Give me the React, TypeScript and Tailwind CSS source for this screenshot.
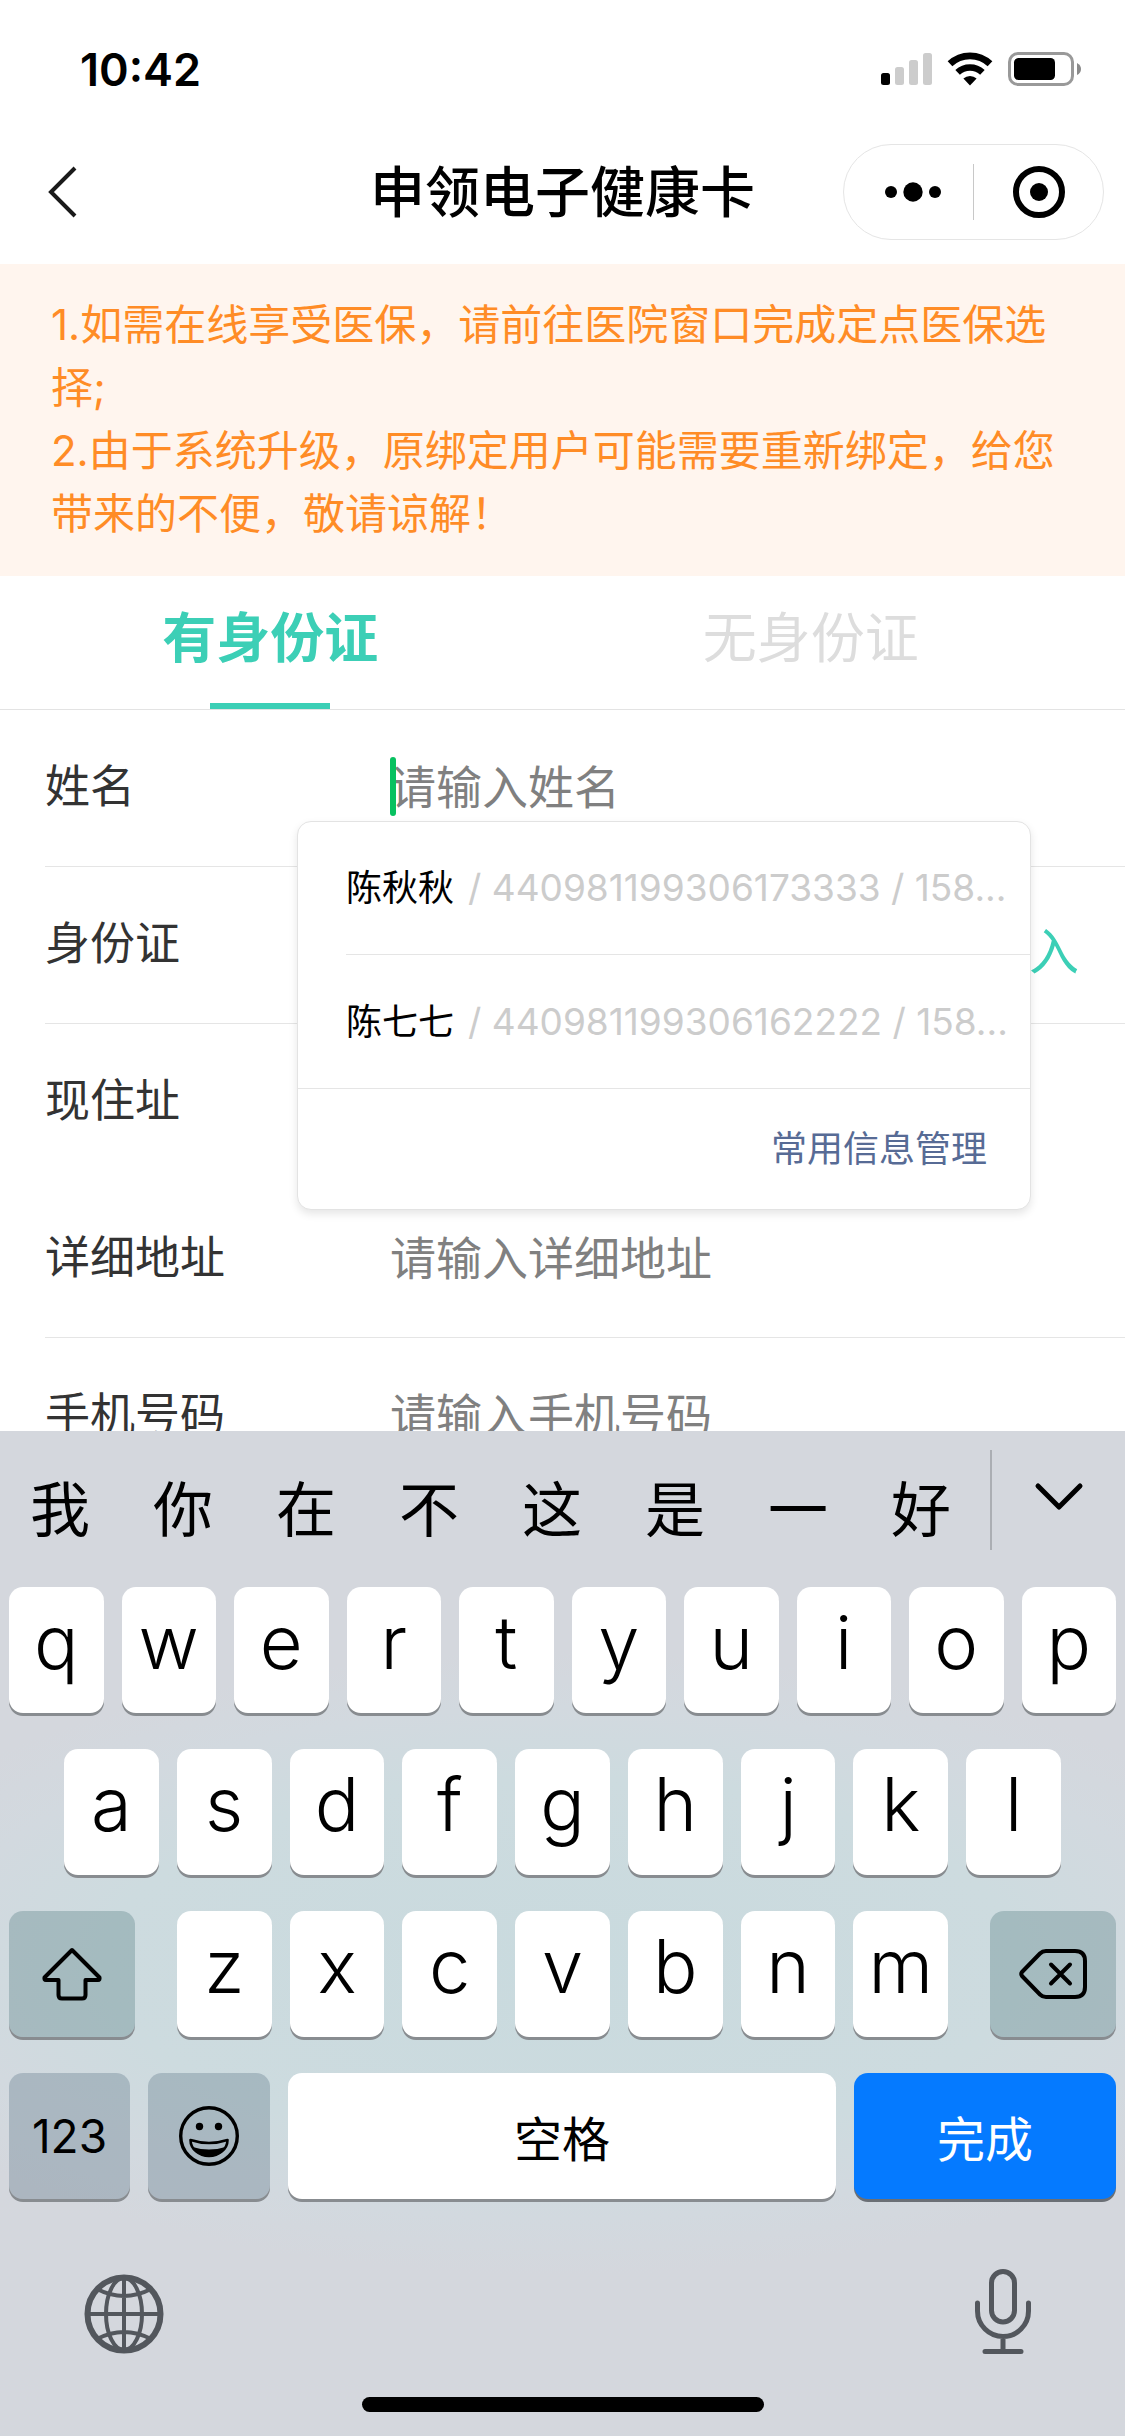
import React, { useState } from 'react';

type Field = {
  id: string;
  label: string;
  placeholder?: string;
  divider: boolean;
};

const FIELDS: Field[] = [
  { id: 'name', label: '姓名', placeholder: '请输入姓名', divider: true },
  { id: 'idcard', label: '身份证', divider: true },
  { id: 'region', label: '现住址', divider: false },
  { id: 'address', label: '详细地址', placeholder: '请输入详细地址', divider: true },
  { id: 'phone', label: '手机号码', placeholder: '请输入手机号码', divider: true },
];

const CONTACTS = [
  { name: '陈秋秋', detail: '/ 440981199306173333 / 158...' },
  { name: '陈七七', detail: '/ 440981199306162222 / 158...' },
];

const CANDIDATES = ['我', '你', '在', '不', '这', '是', '一', '好'];
const ROW_1 = ['q', 'w', 'e', 'r', 't', 'y', 'u', 'i', 'o', 'p'];
const ROW_2 = ['a', 's', 'd', 'f', 'g', 'h', 'j', 'k', 'l'];
const ROW_3 = ['z', 'x', 'c', 'v', 'b', 'n', 'm'];

const StatusBar: React.FC = () => (
  <div className="flex h-[120px] items-center justify-between pt-[18px] pr-[43px] pl-[80px]">
    <span className="text-[45px] leading-none font-semibold">10:42</span>
    <div className="flex items-center gap-[15px]">
      <svg width="51" height="32" viewBox="0 0 51 32">
        <rect x="0" y="20" width="9" height="12" rx="2.5" fill="#000" />
        <rect x="14" y="14" width="9" height="18" rx="2.5" fill="#ccc" />
        <rect x="28" y="7" width="9" height="25" rx="2.5" fill="#ccc" />
        <rect x="42" y="0" width="9" height="32" rx="2.5" fill="#ccc" />
      </svg>
      <svg width="46" height="34" viewBox="0 0 46 34">
        <path d="M3 11.8A29 29 0 0 1 43 11.8" fill="none" stroke="#000" strokeWidth="6.8" />
        <path d="M10.6 20.4A18 18 0 0 1 35.4 20.4" fill="none" stroke="#000" strokeWidth="6.6" />
        <path d="M16.4 26.6A9.6 9.6 0 0 1 29.6 26.6L23 33.4Z" fill="#000" />
      </svg>
      <svg width="74" height="34" viewBox="0 0 74 34">
        <rect x="1.5" y="1.5" width="63" height="31" rx="8.5" fill="none" stroke="#999" strokeWidth="3" />
        <rect x="6" y="6" width="41" height="22" rx="4.5" fill="#000" />
        <path d="M69 11Q73 13 73 17T69 23Z" fill="#8a8a8a" />
      </svg>
    </div>
  </div>
);

const NavBar: React.FC = () => (
  <header className="grid h-[144px] grid-cols-[1fr_auto_1fr] items-center">
    <div className="pl-[47px]">
      <button type="button" aria-label="返回" className="block">
        <svg width="30" height="52" viewBox="0 0 30 52" fill="none" stroke="#1a1a1a" strokeWidth="4">
          <path d="M28 2L4 26L28 50" />
        </svg>
      </button>
    </div>
    <h1 className="text-[55px] leading-[60px] font-medium">申领电子健康卡</h1>
    <div className="flex justify-end pr-[21px]">
      <div className="flex h-[96px] w-[261px] items-center rounded-full border border-[#e5e5e5]">
        <button type="button" aria-label="更多" className="flex w-[129px] justify-center pl-2">
          <svg width="58" height="20" viewBox="0 0 58 20">
            <circle cx="7" cy="10" r="6" />
            <circle cx="29" cy="10" r="9.7" />
            <circle cx="51" cy="10" r="6" />
          </svg>
        </button>
        <span className="h-[56px] w-px bg-[#c8c8c8]" />
        <button type="button" aria-label="关闭" className="flex flex-1 justify-center">
          <svg width="52" height="52" viewBox="0 0 52 52">
            <circle cx="26" cy="26" r="23" fill="none" stroke="#000" strokeWidth="6" />
            <circle cx="26" cy="26" r="9" />
          </svg>
        </button>
      </div>
    </div>
  </header>
);

const ContactPopup: React.FC = () => (
  <div className="absolute top-[111px] right-[94px] left-[297px] z-10 rounded-[14px] border border-[#e3e3e3] bg-white text-[36px] shadow-[0_4px_8px_rgba(0,0,0,0.1)]">
    <ul>
      {CONTACTS.map((contact, i) => (
        <li key={contact.name} className={i === 0 ? 'pl-[48px]' : 'border-b border-[#e5e5e5] pl-[48px]'}>
          <button
            type="button"
            className={`flex h-[133px] w-full items-center gap-[14px] whitespace-nowrap ${i === 0 ? 'border-b border-[#e5e5e5]' : ''}`}
          >
            <span className="text-black">{contact.name}</span>
            <span className="text-[37px] text-[#ccc]">{contact.detail}</span>
          </button>
        </li>
      ))}
    </ul>
    <div className="flex h-[120px] items-center justify-end pr-[43px]">
      <a href="#manage" className="text-[#576b95]">常用信息管理</a>
    </div>
  </div>
);

const LetterKey: React.FC<{ char: string }> = ({ char }) => (
  <button
    type="button"
    className="flex h-[126px] min-w-0 flex-1 items-center justify-center rounded-[14px] bg-white pb-4 text-[74px] leading-none font-light shadow-[0_3px_0_#888c90]"
  >
    {char}
  </button>
);

const Keyboard: React.FC = () => (
  <section className="bg-[#d4d7dd] bg-[radial-gradient(ellipse_68%_31%_at_50%_53%,#c9dade_0%,#cddbdf_60%,#d2d9df_82%,#d4d7dd_100%)]">
    <div className="flex h-[156px] items-start">
      <div className="flex flex-1 justify-between pt-[44px] pr-[39px] pl-[30px]">
        {CANDIDATES.map((c) => (
          <button key={c} type="button" className="text-[60px] leading-[70px]">{c}</button>
        ))}
      </div>
      <span className="mt-[19px] h-[100px] w-[2px] bg-[#abaeb3]" />
      <button type="button" aria-label="展开" className="flex w-[133px] justify-center pt-[51px]">
        <svg width="50" height="30" viewBox="0 0 50 30" fill="none" stroke="#000" strokeWidth="5" strokeLinecap="round" strokeLinejoin="round">
          <path d="M4 4L25 25L46 4" />
        </svg>
      </button>
    </div>

    <div className="flex flex-col gap-[36px] px-[9px]">
      <div className="flex gap-[18px]">
        {ROW_1.map((c) => <LetterKey key={c} char={c} />)}
      </div>
      <div className="flex gap-[18px] px-[55px]">
        {ROW_2.map((c) => <LetterKey key={c} char={c} />)}
      </div>
      <div className="flex gap-[42px]">
        <button type="button" aria-label="Shift" className="flex h-[126px] w-[126px] items-center justify-center rounded-[14px] bg-[#467078]/30 shadow-[0_3px_0_#888c90]">
          <svg width="60" height="54" viewBox="0 0 60 54" fill="none" stroke="#000" strokeWidth="4" strokeLinejoin="round">
            <path d="M30 3L57.5 30.5Q58 33 56 33H43.5V48Q43.5 51.5 40 51.5H20Q16.5 51.5 16.5 48V33H4Q2 33 2.5 30.5Z" />
          </svg>
        </button>
        <div className="flex flex-1 gap-[18px]">
          {ROW_3.map((c) => <LetterKey key={c} char={c} />)}
        </div>
        <button type="button" aria-label="删除" className="flex h-[126px] w-[126px] items-center justify-center rounded-[14px] bg-[#467078]/30 shadow-[0_3px_0_#888c90]">
          <svg width="68" height="50" viewBox="0 0 68 50" fill="none" stroke="#000" strokeWidth="4" strokeLinejoin="round" strokeLinecap="round">
            <path d="M27 2H56Q66 2 66 12V38Q66 48 56 48H27Q23.5 48 21 45.5L3 27Q1.5 25 3 23L21 4.5Q23.5 2 27 2Z" />
            <path d="M32 15.5L51 34.5M51 15.5L32 34.5" />
          </svg>
        </button>
      </div>
      <div className="flex gap-[18px] text-[48px]">
        <button type="button" className="h-[126px] w-[121px] rounded-[14px] bg-[#4f6a7d]/30 text-[46px] shadow-[0_3px_0_#888c90]">123</button>
        <button type="button" aria-label="表情" className="flex h-[126px] w-[122px] items-center justify-center rounded-[14px] bg-[#4f6a7d]/30 shadow-[0_3px_0_#888c90]">
          <svg width="60" height="60" viewBox="0 0 60 60">
            <circle cx="30" cy="30" r="28.3" fill="none" stroke="#000" strokeWidth="3.4" />
            <circle cx="20.5" cy="20.5" r="3.7" />
            <circle cx="39.5" cy="20.5" r="3.7" />
            <path d="M11.5 34Q30 40 48.5 34C48.5 43 40 50 30 50S11.5 43 11.5 34Z" fill="none" stroke="#000" strokeWidth="2.6" strokeLinejoin="round" />
            <path d="M13.5 41Q30 46 46.5 41C43 47.5 37 50.5 30 50.5S17 47.5 13.5 41Z" />
          </svg>
        </button>
        <button type="button" className="h-[126px] flex-1 rounded-[14px] bg-white pt-2 shadow-[0_3px_0_#888c90]">空格</button>
        <button type="button" className="h-[126px] w-[262px] rounded-[14px] bg-[#057aff] pt-2 text-white shadow-[0_3px_0_#6b6f75]">完成</button>
      </div>
    </div>

    <div className="flex items-end justify-between pt-[70px] pr-[94px] pl-[84px]">
      <button type="button" aria-label="切换键盘">
        <svg className="block" width="80" height="80" viewBox="0 0 80 80" fill="none" stroke="#53575d" strokeWidth="4">
          <circle cx="40" cy="40" r="36.5" strokeWidth="6" />
          <ellipse cx="40" cy="40" rx="18" ry="36" />
          <path d="M40 3V77M3 40H77M13 15Q40 29 67 15M13 65Q40 51 67 65" />
        </svg>
      </button>
      <button type="button" aria-label="语音输入">
        <svg className="block" width="56" height="85" viewBox="0 0 56 85" fill="none" stroke="#53575d" strokeWidth="5" strokeLinecap="round">
          <rect x="16.5" y="2.5" width="23" height="50.5" rx="11.5" />
          <path d="M2.5 34V42A25.5 25.5 0 0 0 53.5 42V34M28 68V82M10 82.5H46" />
        </svg>
      </button>
    </div>

    <div className="flex justify-center pt-[43px] pb-[24px]">
      <span className="h-[15px] w-[402px] rounded-full bg-black" />
    </div>
  </section>
);

const App: React.FC = () => {
  const [values, setValues] = useState<Record<string, string>>({});

  return (
    <div className="flex h-screen flex-col overflow-hidden bg-white font-['Inter','Noto_Sans_CJK_SC',sans-serif] text-black">
      <StatusBar />
      <NavBar />

      <main className="min-h-0 flex-1 overflow-hidden">
        <div className="bg-[#fff5ee] px-[51px] pt-[29px] pb-[31px] text-[42px] leading-[63px] text-[#ff8c26]">
          <p>1.如需在线享受医保，请前往医院窗口完成定点医保选择;</p>
          <p>2.由于系统升级，原绑定用户可能需要重新绑定，给您带来的不便，敬请谅解！</p>
        </div>

        <div className="flex border-b border-[#e3e3e3] pr-[44px] text-[54px] leading-[60px]">
          <button type="button" className="flex flex-1 flex-col items-center gap-[34px] pt-[33px] font-bold text-[#3ccfb6]">
            有身份证
            <span className="h-[6px] w-[120px] bg-[#3ccfb6]" />
          </button>
          <button type="button" className="flex flex-1 flex-col items-center pt-[33px] text-[#ddd]">
            无身份证
          </button>
        </div>

        <form className="relative">
          {FIELDS.map((field) => (
            <div key={field.id} className="pl-[45px]">
              <div className={`flex h-[157px] items-center border-b pb-[2px] ${field.divider ? 'border-[#e5e5e5]' : 'border-transparent'}`}>
                <label htmlFor={field.id} className="w-[345px] text-[45px] leading-[60px] text-[#333]">
                  {field.label}
                </label>
                <input
                  id={field.id}
                  value={values[field.id] ?? ''}
                  onChange={(e) => setValues({ ...values, [field.id]: e.target.value })}
                  placeholder={field.placeholder}
                  className="h-[66px] min-w-0 flex-1 text-[46px] outline-none placeholder:text-[#808080]"
                />
                {field.id === 'idcard' && (
                  <button type="button" className="pt-4 pr-[46px] text-[50px] leading-[60px] text-[#3ccfb6]">入</button>
                )}
              </div>
            </div>
          ))}
          {/* text cursor of the focused name field */}
          <span className="absolute top-[47px] left-[390px] h-[59px] w-[6px] rounded-full bg-[#07c160]" />
          <ContactPopup />
        </form>
      </main>

      <Keyboard />
    </div>
  );
};

export default App;
